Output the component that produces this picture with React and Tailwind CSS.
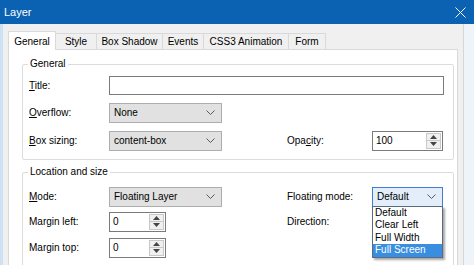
import React from "react";

const font = { fontFamily: '"Liberation Sans", Arial, sans-serif' };

function Chevron() {
  return (
    <svg width="9" height="5" viewBox="0 0 9 5" className="shrink-0">
      <polyline points="0.5,0.5 4.5,4.5 8.5,0.5" fill="none" stroke="#5a5a5a" strokeWidth="1" />
    </svg>
  );
}

function Select({ value, w, active }) {
  return (
    <div
      className={
        "flex items-center justify-between h-[20px] pl-[4px] pr-[6px] border text-[10px] text-black " +
        (active ? "border-[#3c7fd0] bg-[#e3eefa]" : "border-[#adadad] bg-[#e1e1e1]")
      }
      style={{ width: w }}
    >
      <span>{value}</span>
      <Chevron />
    </div>
  );
}

function Spin({ value, w }) {
  return (
    <div
      className="flex items-stretch h-[20px] border border-[#7a7a7a] bg-white text-[10px] text-black"
      style={{ width: w }}
    >
      <div className="flex-1 flex items-center pl-[3px]">{value}</div>
      <div className="flex flex-col w-[15px] my-[1px] mr-[1px] border border-[#c8c8c8] bg-[#f0f0f0]">
        <div className="flex-1 flex items-center justify-center border-b border-[#c8c8c8]">
          <svg width="7" height="4" viewBox="0 0 7 4"><polygon points="0,4 3.5,0 7,4" fill="#444" /></svg>
        </div>
        <div className="flex-1 flex items-center justify-center">
          <svg width="7" height="4" viewBox="0 0 7 4"><polygon points="0,0 3.5,4 7,0" fill="#444" /></svg>
        </div>
      </div>
    </div>
  );
}

function Label({ children, w = "w-[80px]" }) {
  return <div className={w + " text-[10px] text-black shrink-0"}>{children}</div>;
}

function Group({ title, className, children }) {
  return (
    <div className={"relative border border-[#dcdcdc] rounded-[2px] " + className}>
      <div className="absolute left-[5px] -top-[7px] px-[2px] bg-white text-[10px] leading-[12px] text-black">
        {title}
      </div>
      {children}
    </div>
  );
}

export default function App() {
  const tabs = ["Style", "Box Shadow", "Events", "CSS3 Animation", "Form"];
  const widths = ["w-[42px]", "w-[67px]", "w-[42px]", "w-[86px]", "w-[38px]"];
  return (
    <div className="w-[474px] h-[265px] overflow-hidden flex flex-col bg-[#f0f0f0]" style={font}>
      <div className="h-[24px] shrink-0 bg-[#0b61b2] flex items-center justify-between pl-[4px] pr-[8px]">
        <span className="text-white text-[11px]">Layer</span>
        <svg width="11" height="11" viewBox="0 0 11 11">
          <line x1="0.5" y1="0.5" x2="10.5" y2="10.5" stroke="white" strokeWidth="1" />
          <line x1="10.5" y1="0.5" x2="0.5" y2="10.5" stroke="white" strokeWidth="1" />
        </svg>
      </div>
      <div className="flex flex-1 min-h-0">
        <div className="w-[3px] bg-[#cde2f4] shrink-0" />
        <div className="flex-1 flex flex-col bg-[#f0f0f0]">
          <div className="h-[25px] flex items-end pl-[5px] shrink-0">
            <div className="relative z-10 w-[48px] h-[19px] -mb-px bg-white border border-b-0 border-[#d9d9d9] flex items-center justify-center text-[10px] text-black">
              General
            </div>
            {tabs.map((t, i) => (
              <div
                key={t}
                className={
                  widths[i] +
                  " h-[16px] -ml-px bg-[#f0f0f0] border border-b-0 border-[#d9d9d9] flex items-center justify-center text-[10px] text-black"
                }
              >
                {t}
              </div>
            ))}
          </div>
          <div className="ml-[5px] w-[450px] flex-1 bg-white border border-b-0 border-[#d9d9d9] pl-[13px] pr-[3px] pt-[14px]">
            <Group title="General" className="pl-[6px] pr-[9px] pt-[11px] pb-[9px]">
              <div className="flex items-center h-[19px]">
                <Label><u>T</u>itle:</Label>
                <div className="flex-1 h-[19px] border border-[#7a7a7a] bg-white" />
              </div>
              <div className="flex items-center h-[19px] mt-[8px]">
                <Label><u>O</u>verflow:</Label>
                <Select value="None" w={113} />
              </div>
              <div className="flex items-center h-[19px] mt-[9px]">
                <Label><u>B</u>ox sizing:</Label>
                <Select value="content-box" w={113} />
                <div className="w-[65px]" />
                <Label w="w-[85px]">Opa<u>c</u>ity:</Label>
                <Spin value="100" w={71} />
              </div>
            </Group>
            <Group title="Location and size" className="mt-[12px] pl-[6px] pr-[9px] pt-[14px] pb-[20px]">
              <div className="flex items-center h-[19px]">
                <Label><u>M</u>ode:</Label>
                <Select value="Floating Layer" w={113} />
                <div className="w-[65px]" />
                <Label w="w-[85px]">Floating mode:</Label>
                <div className="relative">
                  <Select value="Default" w={71} active />
                  <div className="absolute left-0 top-[19px] w-[71px] z-20 bg-white border border-[#5a6a80] shadow-[2px_2px_2px_rgba(0,0,0,0.35)] text-[10px] text-black">
                    <div className="h-[12.5px] leading-[12.5px] pl-[2px]">Default</div>
                    <div className="h-[12.5px] leading-[12.5px] pl-[2px]">Clear Left</div>
                    <div className="h-[12.5px] leading-[12.5px] pl-[2px]">Full Width</div>
                    <div className="h-[12.5px] leading-[12.5px] pl-[2px] bg-[#3a8ee0] text-white">Full Screen</div>
                  </div>
                </div>
              </div>
              <div className="flex items-center h-[19px] mt-[6px]">
                <Label>Margin left:</Label>
                <Spin value="0" w={57} />
                <div className="w-[121px]" />
                <Label w="w-[85px]">Direction:</Label>
              </div>
              <div className="flex items-center h-[19px] mt-[7px]">
                <Label>Margin top:</Label>
                <Spin value="0" w={57} />
              </div>
            </Group>
          </div>
        </div>
        <div className="w-[11px] shrink-0 border-l border-[#d6d6d6] bg-[#eef4fa]" />
      </div>
    </div>
  );
}
